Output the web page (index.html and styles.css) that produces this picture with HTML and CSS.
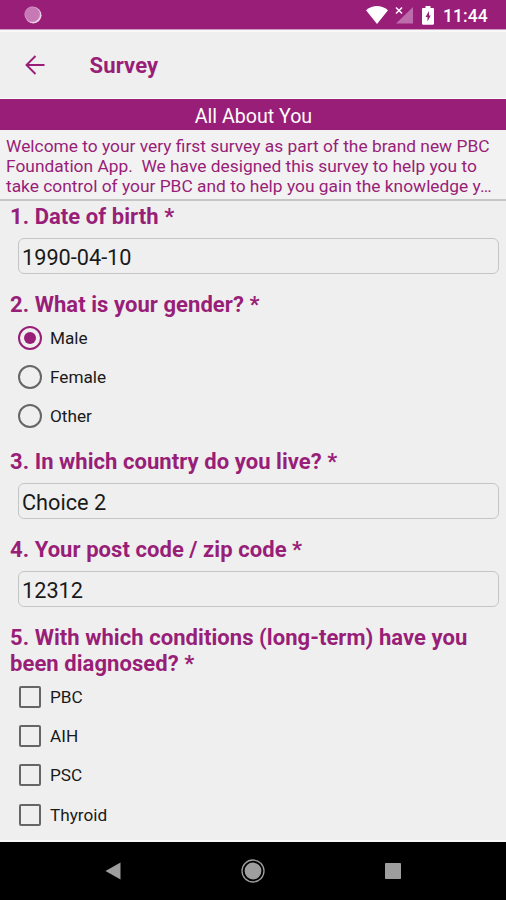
FILE: index.html
```html
<!DOCTYPE html>
<html lang="en">
<head>
<meta charset="utf-8">
<title>Survey</title>
<link rel="stylesheet" href="styles.css">
</head>
<body>
<header class="status">
  <svg class="sync" width="20" height="20" viewBox="0 0 20 20"><circle cx="10.3" cy="10.3" r="8.2" fill="#efd3e9"/><circle cx="9.3" cy="9.3" r="7.4" fill="#c679b5" stroke="#d08cc1"/></svg>
  <svg class="wifi" width="22" height="18" viewBox="0 0 22 18"><path d="M0 4.2Q11-4 22 4.2L11 18Z" fill="#fff"/></svg>
  <svg class="signal" width="18" height="18" viewBox="0 0 18 18"><path d="M18 1V17.5H1Z" fill="#bd6dac"/><path d="M1 1.500l6 6M7 1.500l-6 6" stroke="#fff" stroke-width="1.500"/></svg>
  <svg class="battery" width="12" height="19" viewBox="0 0 12 19"><path d="M3.500 0h5v2H11a1 1 0 0 1 1 1v14.500a1.300 1.300 0 0 1-1.300 1.300H1.300A1.300 1.300 0 0 1 0 17.500V3a1 1 0 0 1 1-1h2.500Z" fill="#fff"/><path d="M7 5L3.500 11h2V15.500L8.700 9.500H7Z" fill="#981e78"/></svg>
  <span class="clock">11:44</span>
</header>
<nav class="toolbar">
  <svg width="20" height="20" viewBox="0 0 20 20" fill="none" stroke="#981e78" stroke-width="1.900"><path d="M19.500 10H2M10.500 1L1.500 10l9 9"/></svg>
  <h1>Survey</h1>
</nav>
<div class="banner"><span>All About You</span></div>
<div class="intro">
  <div>Welcome to your very first survey as part of the brand new PBC</div>
  <div>Foundation App.&nbsp; We have designed this survey to help you to</div>
  <div>take control of your PBC and to help you gain the knowledge y…</div>
</div>
<main>
  <section><h2>1. Date of birth *</h2><div class="field"><span>1990-04-10</span></div></section>
  <section><h2>2. What is your gender? *</h2>
    <ul>
      <li><i class="radio on"></i><span>Male</span></li>
      <li><i class="radio"></i><span>Female</span></li>
      <li><i class="radio"></i><span>Other</span></li>
    </ul>
  </section>
  <section><h2>3. In which country do you live? *</h2><div class="field"><span>Choice 2</span></div></section>
  <section><h2>4. Your post code / zip code *</h2><div class="field"><span>12312</span></div></section>
  <section><h2>5. With which conditions (long-term) have you<br>been diagnosed? *</h2>
    <ul>
      <li><i class="check"></i><span>PBC</span></li>
      <li><i class="check"></i><span>AIH</span></li>
      <li><i class="check"></i><span>PSC</span></li>
      <li><i class="check"></i><span>Thyroid</span></li>
    </ul>
  </section>
</main>
<footer>
  <svg width="16" height="18" viewBox="0 0 16 18"><path d="M.5 9L15.500.500v17Z" fill="#9e9e9e"/></svg>
  <svg width="24" height="24" viewBox="0 0 24 24"><circle cx="12" cy="12" r="11" fill="none" stroke="#9e9e9e" stroke-width="1.300"/><circle cx="12" cy="12" r="8.400" fill="#9e9e9e"/></svg>
  <svg width="16" height="16" viewBox="0 0 16 16"><rect width="16" height="16" rx=".8" fill="#9e9e9e"/></svg>
</footer>
</body>
</html>
```
FILE: styles.css
```css
* { box-sizing: border-box; }
body { margin: 0; width: 506px; height: 900px; overflow: hidden; display: flex; flex-direction: column; background: #efefef; font-family: Roboto, "Liberation Sans", sans-serif; color: #1a1a1a; }
h1, h2, ul { margin: 0; padding: 0; }
.status { flex: none; height: 30px; background: #981e78; border-bottom: 1px solid #cf9bc1; display: flex; align-items: center; padding: 1px 18px 0 23px; color: #fff; }
.wifi { margin-left: 323px; }
.signal { margin-left: 7px; }
.battery { margin-left: 9px; }
.clock { margin-left: 9px; padding-top: 1px; font-size: 17.500px; font-weight: 500; letter-spacing: .1px; white-space: nowrap; }
.toolbar { flex: none; height: 69px; display: flex; align-items: center; padding: 0 0 0 25px; border-top: 2px solid #f8f8f8; border-bottom: 1px solid #fafafa; }
.toolbar h1 { margin-left: 44.500px; font-size: 22px; letter-spacing: .15px; font-weight: 700; color: #981e78; padding-top: 1px; }
.banner { flex: none; height: 31px; background: #981e78; color: #fff; display: flex; align-items: center; justify-content: center; font-size: 19.600px; padding: 3px 0 0 1px; }
.intro { flex: none; height: 71px; padding: 6px 6px 0; border-bottom: 2px solid #c6c6c6; background: #f2f2f2; color: #981e78; font-size: 17.360px; line-height: 20.200px; white-space: nowrap; }
main { flex: none; height: 641px; padding: 2px 7px 0 10px; border-bottom: 2px solid #fafafa; }
h2 { position: relative; top: 1px; font-size: 22px; letter-spacing: .06px; font-weight: 700; line-height: 26.300px; color: #981e78; white-space: nowrap; }
.field { margin: 8.500px 0 16.700px 8px; height: 36.300px; border: 1.500px solid #c4c6c6; border-radius: 6px; display: flex; align-items: center; padding: 3px 3px 0; font-size: 21.700px; }
ul { list-style: none; margin: 1px 0 12px 8px; }
li { display: flex; align-items: center; height: 39.300px; font-size: 17.200px; }
li span { margin-left: 8px; }
.radio { width: 24px; height: 24px; border: 2px solid #666; border-radius: 50%; display: grid; place-items: center; }
.radio.on { border-color: #981e78; }
.radio.on::after { content: ""; width: 12px; height: 12px; border-radius: 50%; background: #981e78; }
.check { width: 22px; height: 22px; margin: 0 1px; border: 2px solid #666; border-radius: 2px; }
footer { flex: 1; background: #000; display: flex; align-items: center; justify-content: space-between; padding: 0 105px; }
```
